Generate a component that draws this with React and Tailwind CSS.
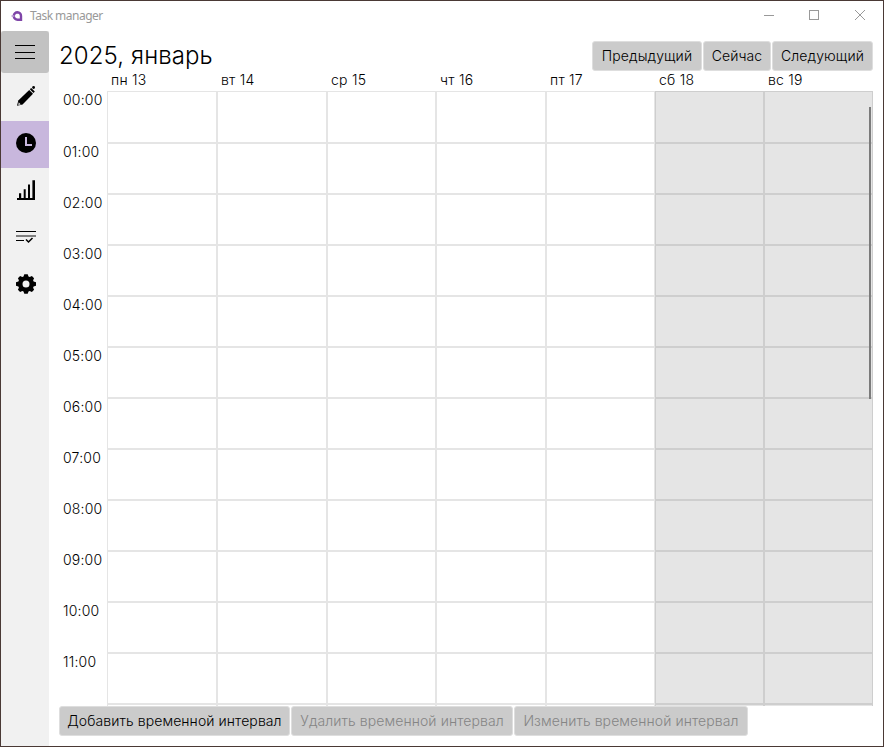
import React from "react";

const DAYS = [
  { label: "пн 13" },
  { label: "вт 14" },
  { label: "ср 15" },
  { label: "чт 16" },
  { label: "пт 17" },
  { label: "сб 18", weekend: true },
  { label: "вс 19", weekend: true },
];

const HOURS = ["00:00", "01:00", "02:00", "03:00", "04:00", "05:00", "06:00", "07:00", "08:00", "09:00", "10:00", "11:00"];

const COLUMNS = "grid-cols-[110px_110px_109px_110px_109px_109px_109px]";

function Logo() {
  return (
    <svg width="12" height="12" viewBox="0 0 12 12" fill="none">
      <path d="M6.500 2.300A3.600 3.600 0 1 0 6.500 9.700H10V6A3.600 3.600 0 0 0 6.500 2.300Z" stroke="#7f45a8" strokeWidth="2.400" />
      <path d="M0.500 6h3" stroke="#b898d2" strokeWidth="1.600" />
    </svg>
  );
}

function TitleBar() {
  return (
    <header className="flex h-[30px] shrink-0 items-center pl-[10px]">
      <Logo />
      <span className="ml-[7px] grow font-['Noto_Sans',sans-serif] text-[12px] font-normal leading-[16px] tracking-[-0.52px] text-[#999999]">Task manager</span>
      <svg width="120" height="30" viewBox="0 0 120 30" fill="none" stroke="#999999" shapeRendering="crispEdges">
        <path d="M1 14.5h10" />
        <rect x="46.5" y="9.5" width="9" height="9" />
        <path d="M92 9l10 10M102 9l-10 10" shapeRendering="auto" />
      </svg>
    </header>
  );
}

function PencilIcon() {
  return (
    <svg width="20" height="20" viewBox="0 0 20 20">
      <path d="M1 19.8 2.3 14.600 13.200 4 17 7.800 6.600 18.500Z" fill="#000" />
      <path d="m13.800 3.300 1.400-1.300 3.600 3.600-1.300 1.500Z" fill="#000" />
      <circle cx="17.600" cy="1.500" r="1.400" fill="#000" />
      <path d="m2.700 16.300 2.200 2.100-2.700.6Z" fill="#ddd" />
    </svg>
  );
}

function ClockIcon() {
  return (
    <svg width="20" height="20" viewBox="0 0 20 20">
      <circle cx="10" cy="10" r="10" fill="#000" />
      <path d="M10 4v8H16" stroke="#c8b7dd" strokeWidth="2" fill="none" />
    </svg>
  );
}

function BarsIcon() {
  return (
    <svg width="20" height="20" viewBox="0 0 20 20" fill="#000">
      <path d="M1 18h18v2H1zM3 13.3h2.2V18H3zM7.7 9.2h2V18h-2zM12 4.6h2V18h-2zM16.4.2H19V20h-2.6z" />
    </svg>
  );
}

function ListCheckIcon() {
  return (
    <svg width="20" height="20" viewBox="0 0 20 20" fill="none">
      <path d="M0 4.5h20M0 13.5h8" stroke="#000" />
      <path d="M0 9h20" stroke="#808080" strokeWidth="2" />
      <path d="m10 12.500 2.500 2.500 4-4" stroke="#000" strokeWidth="1.500" />
    </svg>
  );
}

function GearIcon() {
  return (
    <svg width="20" height="20" viewBox="0 0 20 20" fill="#000">
      <path
        fillRule="evenodd"
        d="M8.3.2h3.4l.8 2.3 1.2.5 2.2-1 2.2 2.2-1 2.1.5 1.2 2.4.8v3.4l-2.4.8-.5 1.2 1 2.1-2.2 2.2-2.2-1-1.2.5-.8 2.3H8.3l-.8-2.3-1.2-.5-2.2 1-2.2-2.2 1-2.1-.5-1.2L0 11.7V8.3l2.400-.8.5-1.2-1-2.1L4.100 2l2.200 1 1.200-.5ZM10 6.500a3.500 3.500 0 1 0 0 7 3.500 3.500 0 0 0 0-7Z"
      />
    </svg>
  );
}

function NavItem({ active, children }) {
  return (
    <button className={`flex h-[47px] w-full items-start justify-center pl-[2px] pt-3 ${active ? "bg-[#c8b7dd]" : ""}`}>
      {children}
    </button>
  );
}

function Sidebar() {
  return (
    <nav className="flex w-12 shrink-0 flex-col bg-[#f1f1f1]">
      <button className="mb-px flex h-[42px] w-12 items-center justify-start rounded-[3px] bg-[#c2c2c2] pl-[14px]">
        <svg width="20" height="16" viewBox="0 0 20 16" stroke="#000" shapeRendering="crispEdges">
          <path d="M0 1.500h20M0 8.500h20M0 14.500h20" />
        </svg>
      </button>
      <NavItem><PencilIcon /></NavItem>
      <NavItem active><ClockIcon /></NavItem>
      <NavItem><BarsIcon /></NavItem>
      <NavItem><ListCheckIcon /></NavItem>
      <NavItem><GearIcon /></NavItem>
    </nav>
  );
}

function Button({ disabled, width, children }) {
  return (
    <button
      disabled={disabled}
      className={`flex h-[30px] items-center justify-center whitespace-nowrap rounded-[3px] border border-[#dedede] bg-[#cbcbcb] pb-px tracking-[0.09px] ${width} ${disabled ? "text-[#858585]" : "text-black"}`}
    >
      {children}
    </button>
  );
}

function Calendar() {
  return (
    <section className="flex grow flex-col overflow-hidden pr-[10px]">
      <div className={`grid pl-[48px] ${COLUMNS}`}>
        {DAYS.map((d) => (
          <div key={d.label} className="h-5 pl-1 leading-[18px] tracking-[0.25px]">{d.label}</div>
        ))}
      </div>
      <div className="relative flex h-[615px] overflow-hidden">
        <div className="w-[48px] shrink-0 pl-1 tracking-[0.2px]">
          {HOURS.map((h) => (
            <div key={h} className="h-[51px] leading-[18px] first:h-[52px]">{h}</div>
          ))}
        </div>
        <div className={`grid h-[664px] grow ${COLUMNS}`}>
          {DAYS.map((d) => (
            <div key={d.label}>
              {[...HOURS, "12:00"].map((h) => (
                <div key={h} className={`h-[51px] border first:h-[52px] ${d.weekend ? "border-[#cecece] bg-[#e5e5e5]" : "border-[#e5e5e5]"}`} />
              ))}
            </div>
          ))}
        </div>
        <div className="absolute right-[2px] top-4 h-[292px] w-[2px] bg-[#7b7b7b]" />
      </div>
    </section>
  );
}

export default function App() {
  return (
    <div className="flex h-[747px] w-[884px] flex-col overflow-hidden border border-[#4a3935] bg-white font-[Inter,sans-serif] text-[14px] font-[350] tracking-[0.07px] text-black">
      <TitleBar />
      <div className="flex min-h-0 grow">
        <Sidebar />
        <main className="flex min-w-0 grow flex-col pl-[10px]">
          <div className="flex h-[40px] shrink-0 justify-between pr-[10px] pt-[10px]">
            <h1 className="text-[24px] font-light leading-[30px] tracking-[0.1px]">2025, январь</h1>
            <div className="flex gap-px">
              <Button width="w-[110px]">Предыдущий</Button>
              <Button width="w-[68px]">Сейчас</Button>
              <Button width="w-[101px]">Следующий</Button>
            </div>
          </div>
          <Calendar />
          <div className="flex h-[40px] shrink-0 gap-px">
            <Button width="w-[231px]">Добавить временной интервал</Button>
            <Button disabled width="w-[222px]">Удалить временной интервал</Button>
            <Button disabled width="w-[234px]">Изменить временной интервал</Button>
          </div>
        </main>
      </div>
    </div>
  );
}
